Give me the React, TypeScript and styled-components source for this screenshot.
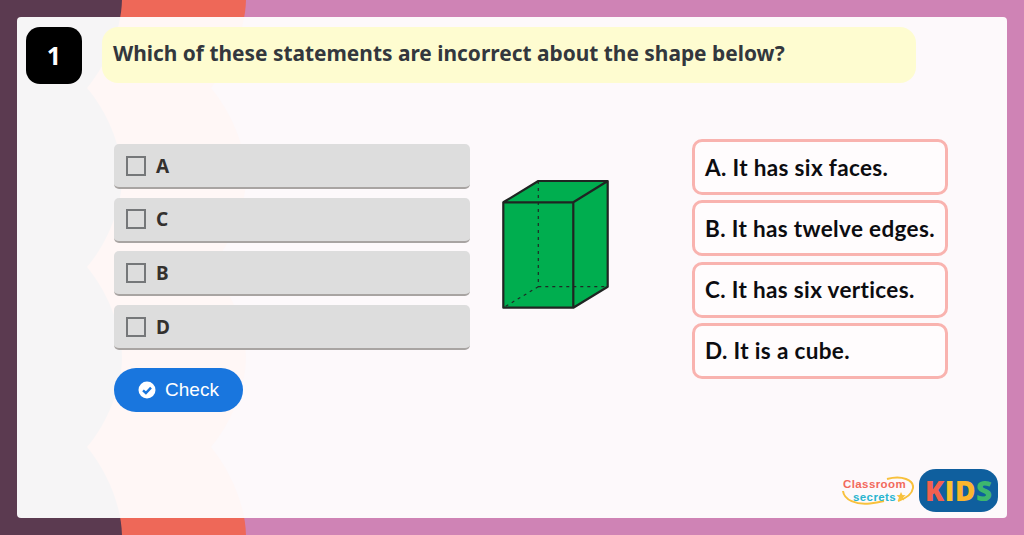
import React from "react";
import styled, { createGlobalStyle } from "styled-components";

const GlobalStyle = createGlobalStyle`
  html, body { margin: 0; padding: 0; background: #5b3a50; }
  body { font-family: "Noto Sans", sans-serif; overflow: hidden; }
`;

const Stage = styled.div`
  position: relative;
  width: 1024px;
  height: 535px;
  padding: 17px;
  box-sizing: border-box;
  overflow: hidden;
`;

const Backdrop = styled.svg`
  position: absolute;
  left: 0;
  top: 0;
`;

const Panel = styled.main`
  position: relative;
  box-sizing: border-box;
  height: 501px;
  padding: 10px 9px 6px;
  display: flex;
  flex-direction: column;
  background: rgba(255, 255, 255, 0.95);
  border-radius: 4px;
`;

const Header = styled.header`
  display: flex;
  align-items: flex-start;
  gap: 20px;
`;

const NumberBadge = styled.div`
  width: 56px;
  height: 57px;
  padding-bottom: 2px;
  box-sizing: border-box;
  display: flex;
  align-items: center;
  justify-content: center;
  background: #000;
  border-radius: 14px;
  color: #fff;
  font-size: 25px;
  font-weight: 700;
`;

const Question = styled.h1`
  margin: 0;
  width: 814px;
  height: 56px;
  box-sizing: border-box;
  padding: 0 11px 5px;
  display: flex;
  align-items: center;
  background: #fefcd0;
  border-radius: 16px;
  color: #33373d;
  font-size: 20.9px;
  font-weight: 700;
  white-space: nowrap;
`;

const Body = styled.section`
  display: flex;
  align-items: flex-start;
  padding: 55px 0 0 88px;
`;

const Choices = styled.div`
  width: 356px;
  margin-top: 5px;
  display: flex;
  flex-direction: column;
  gap: 8.7px;
`;

const Choice = styled.label`
  height: 45px;
  box-sizing: border-box;
  padding: 0 0 0 12px;
  display: flex;
  align-items: center;
  gap: 10px;
  background: #dddddd;
  border-bottom: 2px solid #a8a4a2;
  border-radius: 5px;
  color: #33302e;
  font-size: 19px;
  font-weight: 700;
`;

const Box = styled.span`
  width: 20px;
  height: 20px;
  box-sizing: border-box;
  border: 2px solid #757779;
`;

const CheckButton = styled.button`
  width: 129px;
  height: 44px;
  margin-top: 9.5px;
  padding: 0;
  display: flex;
  align-items: center;
  justify-content: center;
  gap: 9px;
  border: none;
  border-radius: 22px;
  background: #1976de;
  color: #fff;
  font-family: "Liberation Sans", Arial, sans-serif;
  font-size: 19px;
`;

const Figure = styled.svg`
  display: block;
  flex: none;
  margin: 37px 0 0 28px;
`;

const Statements = styled.div`
  margin-left: 74px;
  width: 256px;
  display: flex;
  flex-direction: column;
  gap: 5.3px;
`;

const Statement = styled.div`
  height: 56px;
  box-sizing: border-box;
  padding: 0 0 0 10px;
  display: flex;
  align-items: center;
  background: #fffcfd;
  border: 3px solid #f9b3af;
  border-radius: 10px;
  color: #0c0c10;
  font-family: Lato, sans-serif;
  font-size: 22.5px;
  font-weight: 700;
  letter-spacing: 0.35px;
  white-space: nowrap;
`;

const Footer = styled.footer`
  margin-top: auto;
  display: flex;
  justify-content: flex-end;
  align-items: center;
  gap: 5px;
`;

const SecretsLogo = styled.div`
  position: relative;
  width: 72px;
  height: 30px;
  font-family: "Liberation Sans", Arial, sans-serif;
  font-weight: 700;
  font-size: 11.5px;
`;

const Swoosh = styled.svg`
  position: absolute;
  left: 0;
  top: 0;
`;

const SecretsWord = styled.div<{ $color: string; $top: number; $left: number }>`
  position: absolute;
  top: ${(p) => p.$top}px;
  left: ${(p) => p.$left}px;
  color: ${(p) => p.$color};
  letter-spacing: 0.4px;
  line-height: 13px;
  white-space: nowrap;
`;

const KidsLogo = styled.div`
  width: 79px;
  height: 43px;
  box-sizing: border-box;
  padding-bottom: 2px;
  display: flex;
  align-items: center;
  justify-content: center;
  gap: 0.5px;
  background: #0f5f9e;
  border-radius: 17px / 15px;
  font-family: "Open Sans", sans-serif;
  font-size: 28px;
  font-weight: 800;
  line-height: 1;
`;

const KidsLetter = styled.span<{ $color: string }>`
  color: ${(p) => p.$color};
`;

const choices = ["A", "C", "B", "D"];
const statements = [
  "A. It has six faces.",
  "B. It has twelve edges.",
  "C. It has six vertices.",
  "D. It is a cube.",
];

const scallop = (o: number, close: string) => {
  const R = 122 + o;
  const L = 87 + o;
  const N = 106 + o;
  return (
    `M${R} -2 C${R} 30 ${N} 65 ${L} 88 C${N} 110 ${R} 145 ${R} 177 ` +
    `C${R} 209 ${N} 245 ${L} 267 C${N} 290 ${R} 325 ${R} 357 ` +
    `C${R} 389 ${N} 425 ${L} 447 C${N} 470 ${R} 505 ${R} 537 ${close}`
  );
};

export default function App() {
  return (
    <Stage>
      <GlobalStyle />
      <Backdrop width="1024" height="535" viewBox="0 0 1024 535" aria-hidden>
        <rect width="1024" height="535" fill="#5b3a50" />
        <path d={scallop(0, "L1024 537 L1024 -2 Z")} fill="#ee6858" />
        <path d={scallop(124, "L1024 537 L1024 -2 Z")} fill="#cf83b5" />
      </Backdrop>
      <Panel>
        <Header>
          <NumberBadge>1</NumberBadge>
          <Question>Which of these statements are incorrect about the shape below?</Question>
        </Header>
        <Body>
          <Choices>
            {choices.map((c) => (
              <Choice key={c}>
                <Box />
                {c}
              </Choice>
            ))}
            <CheckButton>
              <svg width="18" height="18" viewBox="0 0 18 18" aria-hidden>
                <circle cx="9" cy="9" r="8.5" fill="#fff" />
                <path d="M5 9.3 L7.9 12 L13 6.6" fill="none" stroke="#1976de" strokeWidth="2.4" />
              </svg>
              Check
            </CheckButton>
          </Choices>
          <Figure width="120" height="136" viewBox="498 176 120 136" aria-hidden>
            <path d="M503.3 202.3 L538.3 181 L607.7 181 L607.7 286.7 L573.3 307.7 L503.3 307.7 Z" fill="#00ae4f" />
            <path
              d="M538.3 181 V286.7 M538.3 286.7 H607.7 M538.3 286.7 L503.3 307.7"
              fill="none"
              stroke="#1f2a25"
              strokeWidth="1.2"
              strokeDasharray="3 4"
            />
            <path
              d="M503.3 202.3 H573.3 V307.7 H503.3 Z M503.3 202.3 L538.3 181 H607.7 L573.3 202.3 M607.7 181 V286.7 L573.3 307.7"
              fill="none"
              stroke="#1f2522"
              strokeWidth="2.2"
              strokeLinejoin="round"
            />
          </Figure>
          <Statements>
            {statements.map((s) => (
              <Statement key={s}>{s}</Statement>
            ))}
          </Statements>
        </Body>
        <Footer>
          <SecretsLogo>
            <Swoosh width="72" height="30" viewBox="0 0 72 30" aria-hidden>
              <path d="M45 3 C60 -1 72 4 71 12 C70 19 62 23 56 25" fill="none" stroke="#f8c13c" strokeWidth="2" />
              <path d="M1 15 C2 24 14 29 28 27.5 C33 27 38 26 42 25" fill="none" stroke="#f8c13c" strokeWidth="2" />
              <path d="M59 16 l1.5 3 3.2 .3 -2.4 2 .8 3.2 -3 -1.7 -3 1.7 .8 -3.2 -2.4 -2 3.2 -.3 Z" fill="#f8c13c" />
            </Swoosh>
            <SecretsWord $color="#f2695c" $top={2} $left={1}>Classroom</SecretsWord>
            <SecretsWord $color="#29b5cf" $top={15} $left={11}>secrets</SecretsWord>
          </SecretsLogo>
          <KidsLogo>
            <KidsLetter $color="#f2604f">K</KidsLetter>
            <KidsLetter $color="#f9c22e">I</KidsLetter>
            <KidsLetter $color="#f9b52e">D</KidsLetter>
            <KidsLetter $color="#3db66e">S</KidsLetter>
          </KidsLogo>
        </Footer>
      </Panel>
    </Stage>
  );
}
